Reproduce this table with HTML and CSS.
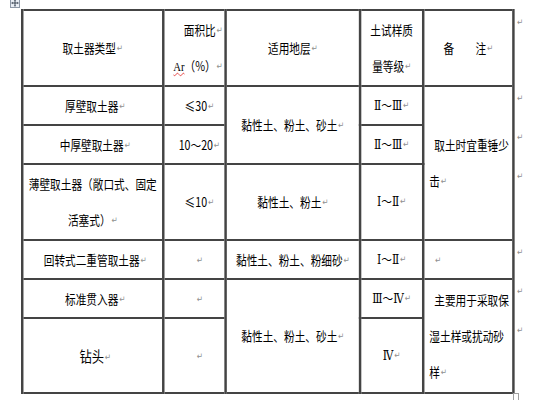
FILE: index.html
```html
<!DOCTYPE html>
<html lang="zh-CN">
<head>
<meta charset="utf-8">
<title>取土器类型</title>
<link rel="stylesheet" href="styles.css">
</head>
<body>
<div class="page">
  <span class="move-handle" aria-hidden="true">
    <svg width="10" height="10" viewBox="0 0 10 10">
      <rect x="0.5" y="0.5" width="9" height="9" fill="#e9eef5" stroke="#8c97a6"/>
      <path d="M5 2.2v5.6M2.2 5h5.6" stroke="#2f3a4a" stroke-width="0.9"/>
      <path d="M5 1.2L3.8 2.6h2.4zM5 8.8L3.8 7.4h2.4zM1.2 5L2.6 3.8v2.4zM8.8 5L7.4 3.8v2.4z" fill="#2f3a4a"/>
    </svg>
  </span>
  <div class="sheet">
    <table class="grid">
      <colgroup>
        <col class="c-type"><col class="c-ratio"><col class="c-layer"><col class="c-grade"><col class="c-note"><col class="c-end">
      </colgroup>
      <tbody>
        <tr class="r-double">
          <td>取土器类型<i class="pm">↵</i></td>
          <td class="ratio">面积比<i class="pm">↵</i><br><span class="ar">Ar</span>（%）<i class="pm">↵</i></td>
          <td>适用地层<i class="pm">↵</i></td>
          <td>土试样质<br>量等级<i class="pm">↵</i></td>
          <td>备　　注<i class="pm">↵</i></td>
          <td class="end"><i class="pm">↵</i></td>
        </tr>
        <tr class="r-single">
          <td class="kind">厚壁取土器<i class="pm">↵</i></td>
          <td class="val">≤30<i class="pm">↵</i></td>
          <td rowspan="2">黏性土、粉土、砂土<i class="pm">↵</i></td>
          <td class="rn">Ⅱ～Ⅲ<i class="pm">↵</i></td>
          <td class="note" rowspan="3">取土时宜重锤少<br>击<i class="pm">↵</i></td>
          <td class="end"><i class="pm">↵</i></td>
        </tr>
        <tr class="r-single">
          <td class="kind">中厚壁取土器<i class="pm">↵</i></td>
          <td class="val">10～20<i class="pm">↵</i></td>
          <td class="rn">Ⅱ～Ⅲ<i class="pm">↵</i></td>
          <td class="end"><i class="pm">↵</i></td>
        </tr>
        <tr class="r-double">
          <td>薄壁取土器（敞口式、固定<br>活塞式）<i class="pm">↵</i></td>
          <td class="val">≤10<i class="pm">↵</i></td>
          <td>黏性土、粉土<i class="pm">↵</i></td>
          <td class="rn">Ⅰ～Ⅱ<i class="pm">↵</i></td>
          <td class="end"><i class="pm">↵</i></td>
        </tr>
        <tr class="r-single">
          <td class="kind">回转式二重管取土器<i class="pm">↵</i></td>
          <td class="val"><i class="pm">↵</i></td>
          <td>黏性土、粉土、粉细砂<i class="pm">↵</i></td>
          <td class="rn">Ⅰ～Ⅱ<i class="pm">↵</i></td>
          <td class="note"><i class="pm">↵</i></td>
          <td class="end"><i class="pm">↵</i></td>
        </tr>
        <tr class="r-single">
          <td class="kind">标准贯入器<i class="pm">↵</i></td>
          <td class="val"><i class="pm">↵</i></td>
          <td rowspan="2">黏性土、粉土、砂土<i class="pm">↵</i></td>
          <td class="rn">Ⅲ～Ⅳ<i class="pm">↵</i></td>
          <td class="note" rowspan="2">主要用于采取保<br>湿土样或扰动砂<br>样<i class="pm">↵</i></td>
          <td class="end"><i class="pm">↵</i></td>
        </tr>
        <tr class="r-drill">
          <td class="kind big">钻头<i class="pm">↵</i></td>
          <td class="val"><i class="pm">↵</i></td>
          <td class="rn">Ⅳ<i class="pm">↵</i></td>
          <td class="end"><i class="pm">↵</i></td>
        </tr>
      </tbody>
    </table>
  </div>
  <span class="resize-handle" aria-hidden="true"></span>
</div>
</body>
</html>
```
FILE: styles.css
```css
html, body {
  margin: 0;
  padding: 0;
  background: #fff;
  overflow: hidden;
}

.page {
  position: relative;
  width: 533px;
  height: 400px;
}

.sheet {
  padding: 9px 0 0 21px;
}

.grid {
  border-collapse: collapse;
  table-layout: fixed;
  width: 611px;
  transform: scaleX(0.82);
  transform-origin: 0 0;
  font-family: "Noto Sans CJK SC", "Noto Sans CJK JP", sans-serif;
  font-size: 13px;
  color: #000;
}

.c-type { width: 172px; }
.c-ratio { width: 76px; }
.c-layer { width: 164px; }
.c-grade { width: 77px; }
.c-note { width: 110px; }
.c-end { width: 12px; }

.r-single { height: 39px; }
.r-double { height: 76px; }
.r-drill { height: 75px; }

.grid td {
  border-style: solid;
  border-color: #444;
  border-width: 2px 3px;
  padding: 0 4px;
  line-height: 36px;
  text-align: center;
  vertical-align: middle;
  white-space: nowrap;
  overflow: visible;
}

.grid td.kind {
  padding-left: 8px;
  padding-right: 2px;
}

.grid td.val {
  padding-left: 14px;
  padding-right: 2px;
}

.grid td.ratio {
  text-align: right;
  padding-right: 2px;
}

.grid td.note {
  text-align: left;
  padding-left: 6px;
  text-indent: 6px;
}

.grid td.end {
  border: none;
  text-align: left;
  vertical-align: top;
  line-height: 24px;
  padding: 0 0 0 2px;
}

.grid td.big {
  font-size: 15px;
}

.rn {
  font-family: "Liberation Serif", "DejaVu Serif", "Noto Sans CJK SC", serif;
}

.ar {
  font-family: "Liberation Serif", serif;
  text-decoration: underline wavy #e23a3a;
  text-decoration-thickness: 1px;
}

.pm {
  font-style: normal;
  font-family: "DejaVu Sans", sans-serif;
  font-size: 9px;
  line-height: 0;
  color: #8e8e8e;
  margin-left: 1px;
  vertical-align: 2px;
  text-indent: 0;
}

.move-handle {
  position: absolute;
  left: 10px;
  top: -2px;
  width: 10px;
  height: 10px;
  line-height: 0;
}

.resize-handle {
  position: absolute;
  left: 513px;
  top: 393px;
  width: 4px;
  height: 6px;
  border: 1px solid #a0a0a0;
  background: #fff;
}
```
